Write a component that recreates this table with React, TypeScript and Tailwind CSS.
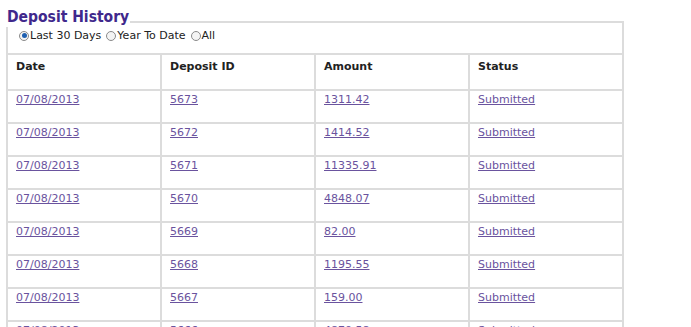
const rows = [
  ['07/08/2013', '5673', '1311.42', 'Submitted'],
  ['07/08/2013', '5672', '1414.52', 'Submitted'],
  ['07/08/2013', '5671', '11335.91', 'Submitted'],
  ['07/08/2013', '5670', '4848.07', 'Submitted'],
  ['07/08/2013', '5669', '82.00', 'Submitted'],
  ['07/08/2013', '5668', '1195.55', 'Submitted'],
  ['07/08/2013', '5667', '159.00', 'Submitted'],
  ['07/08/2013', '5666', '4870.58', 'Submitted'],
];

function Radio({ checked, label }: { checked?: boolean; label: string }) {
  return (
    <label className="flex items-center mr-[5px]">
      <span className="w-[10px] h-[10px] rounded-full border border-[#8a8a8a] bg-[#f4f4f4] flex items-center justify-center">
        {checked && <span className="w-[5px] h-[5px] rounded-full bg-[#1e5fb0]" />}
      </span>
      <span className="ml-[1px]">{label}</span>
    </label>
  );
}

export default function App() {
  return (
    <div className="bg-white min-h-screen pl-[6px] pt-[7px] font-['DejaVu_Sans',Verdana,sans-serif] text-[11px] text-[#222]">
      <h2 className="relative z-10 block w-fit bg-white pl-[1px] pr-[1px] text-[15.5px] leading-[20px] font-bold text-[#40288c] font-['DejaVu_Sans_Condensed','DejaVu_Sans',sans-serif]">
        Deposit History
      </h2>
      <table className="-mt-[6px] w-[618px] table-fixed border-separate border-spacing-0 border border-[#dcdcdc]">
        <tbody>
          <tr>
            <td colSpan={4} className="h-[32px] align-top pt-[6px] pl-[11px] border border-[#dcdcdc]">
              <div className="flex leading-[13px]">
                <Radio checked label="Last 30 Days" />
                <Radio label="Year To Date" />
                <Radio label="All" />
              </div>
            </td>
          </tr>
          <tr>
            {['Date', 'Deposit ID', 'Amount', 'Status'].map((h) => (
              <th key={h} className="h-[36px] align-top text-left font-bold pt-[4px] pl-[8px] border border-[#dcdcdc]">
                {h}
              </th>
            ))}
          </tr>
          {rows.map((r) => (
            <tr key={r[1]}>
              {r.map((c, i) => (
                <td key={i} className="h-[33px] align-top pt-[1px] pl-[8px] border border-[#dcdcdc]">
                  <a href="#" className="text-[#6a539e] underline">
                    {c}
                  </a>
                </td>
              ))}
            </tr>
          ))}
        </tbody>
      </table>
    </div>
  );
}
